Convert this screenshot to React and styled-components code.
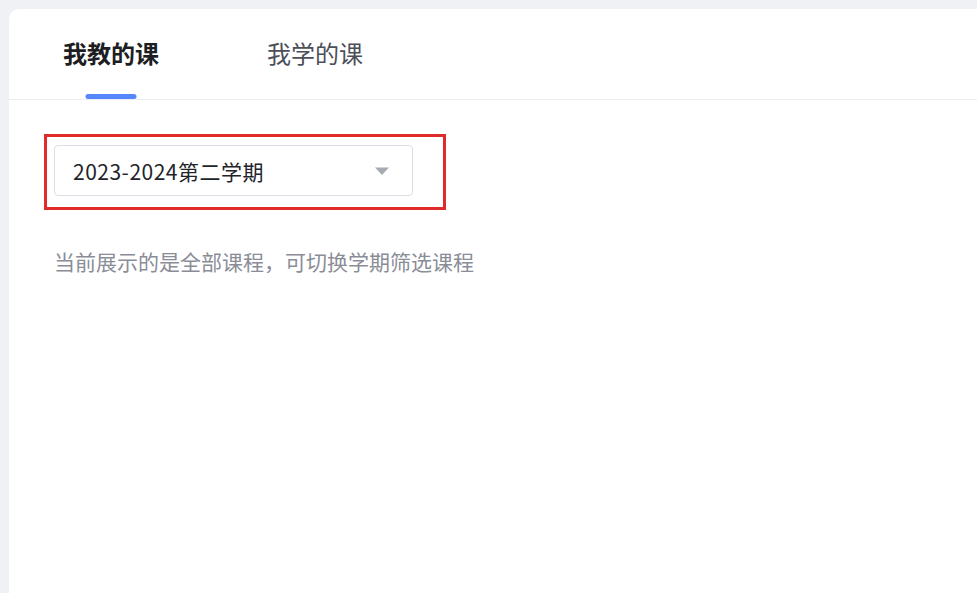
import React, { useState } from "react";
import styled, { createGlobalStyle } from "styled-components";

const GlobalStyle = createGlobalStyle`
	html, body {
		margin: 0;
		padding: 0;
		background: #f0f1f5;
		font-family: "Noto Sans CJK SC", "Noto Sans", sans-serif;
		overflow: hidden;
	}
`;

const Page = styled.div`
	height: 593px;
	padding: 9px 0 0 9px;
	box-sizing: border-box;
	display: flex;
`;

const Card = styled.div`
	flex: 1;
	background: #ffffff;
	border-top-left-radius: 10px;
	display: flex;
	flex-direction: column;
`;

const TabBar = styled.div`
	height: 91px;
	border-bottom: 1px solid #ebedf0;
	display: flex;
	align-items: stretch;
	padding-left: 54px;
	gap: 108px;
	box-sizing: border-box;
`;

const Tab = styled.div`
	position: relative;
	display: flex;
	align-items: center;
	padding-bottom: 4px;
	font-size: 24px;
	font-weight: ${(p) => (p.active ? 700 : 400)};
	color: ${(p) => (p.active ? "#1d1e24" : "#4c4e58")};
	cursor: pointer;

	&::after {
		content: "";
		display: ${(p) => (p.active ? "block" : "none")};
		position: absolute;
		left: 50%;
		bottom: 0;
		transform: translateX(-50%);
		width: 51px;
		height: 5px;
		border-radius: 3px;
		background: #5686ff;
	}
`;

const Body = styled.div`
	padding: 34px 0 0 35px;
	display: flex;
	flex-direction: column;
	align-items: flex-start;
`;

const Highlight = styled.div`
	border: 3px solid #e02b2b;
	padding: 8px 30px 11px 7px;
`;

const Select = styled.div`
	width: 359px;
	height: 51px;
	box-sizing: border-box;
	border: 1px solid #dcdfe6;
	border-radius: 4px;
	display: flex;
	align-items: center;
	justify-content: space-between;
	padding: 0 22px 0 18px;
	font-size: 21px;
	letter-spacing: 0.5px;
	color: #23242a;
	cursor: pointer;
`;

const Caret = styled.svg`
	width: 16px;
	height: 10px;
	fill: #a8abb3;
`;

const Hint = styled.p`
	margin: 35px 0 0 10px;
	font-size: 21px;
	color: #8a8d97;
	line-height: 32px;
`;

const App = () => {
	const [tab, setTab] = useState(0);
	const tabs = ["我教的课", "我学的课"];

	return (
		<>
			<GlobalStyle />
			<Page>
				<Card>
					<TabBar>
						{tabs.map((t, i) => (
							<Tab key={t} active={tab === i ? 1 : 0} onClick={() => setTab(i)}>
								{t}
							</Tab>
						))}
					</TabBar>
					<Body>
						<Highlight>
							<Select>
								<span>2023-2024第二学期</span>
								<Caret viewBox="0 0 16 10">
									<path d="M1 1.5 L15 1.5 L8 9 Z" />
								</Caret>
							</Select>
						</Highlight>
						<Hint>当前展示的是全部课程，可切换学期筛选课程</Hint>
					</Body>
				</Card>
			</Page>
		</>
	);
};

export default App;
